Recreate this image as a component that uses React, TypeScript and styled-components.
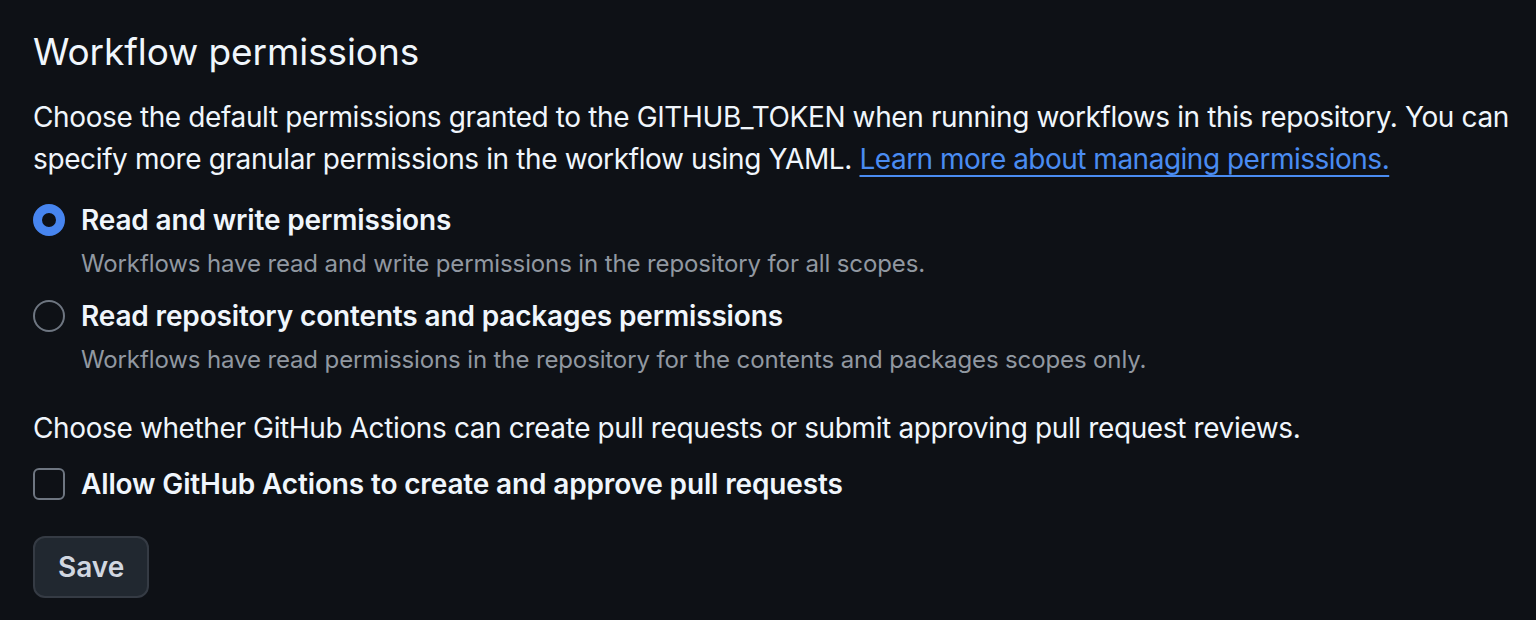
import styled, { createGlobalStyle } from "styled-components";

const GlobalStyle = createGlobalStyle`
  html, body {
    margin: 0;
    padding: 0;
    background: #0e1116;
  }
  body {
    font-family: Inter, "Noto Sans", "Liberation Sans", sans-serif;
    color: #f0f6fc;
  }
`;

interface Option {
  id: string;
  label: string;
  description: string;
}

const options: Option[] = [
  {
    id: "write",
    label: "Read and write permissions",
    description:
      "Workflows have read and write permissions in the repository for all scopes.",
  },
  {
    id: "read",
    label: "Read repository contents and packages permissions",
    description:
      "Workflows have read permissions in the repository for the contents and packages scopes only.",
  },
];

export default function App() {
  const selected = "write";

  return (
    <>
      <GlobalStyle />
      <Page>
        <Title>Workflow permissions</Title>
        <Lead>
          Choose the default permissions granted to the GITHUB_TOKEN when
          running workflows in this repository. You can specify more granular
          permissions in the workflow using YAML.{" "}
          <Link href="#">Learn more about managing permissions.</Link>
        </Lead>

        <Options>
          {options.map((opt) => (
            <OptionRow key={opt.id}>
              <Radio checked={opt.id === selected} />
              <OptionText>
                <OptionLabel>{opt.label}</OptionLabel>
                <OptionNote>{opt.description}</OptionNote>
              </OptionText>
            </OptionRow>
          ))}
        </Options>

        <Lead>
          Choose whether GitHub Actions can create pull requests or submit
          approving pull request reviews.
        </Lead>
        <CheckRow>
          <Checkbox />
          <OptionLabel>Allow GitHub Actions to create and approve pull requests</OptionLabel>
        </CheckRow>

        <SaveButton>Save</SaveButton>
      </Page>
    </>
  );
}

const Page = styled.div`
  padding: 22px 20px 0 33px;
  display: flex;
  flex-direction: column;
  align-items: flex-start;
`;

const Title = styled.h2`
  margin: 0 0 14px;
  font-size: 37px;
  font-weight: 400;
  line-height: 60px;
  letter-spacing: -0.1px;
  color: #f0f6fc;
`;

const Lead = styled.p`
  margin: 0;
  font-size: 28px;
  line-height: 42px;
  letter-spacing: -0.38px;
  color: #f0f6fc;
`;

const Link = styled.a`
  color: #4a8cf2;
  letter-spacing: -0.5px;
  text-decoration: underline;
  text-underline-offset: 6px;
  text-decoration-thickness: 2px;
`;

const Options = styled.div`
  display: flex;
  flex-direction: column;
  gap: 12px;
  margin: 20px 0 27px;
`;

const OptionRow = styled.label`
  display: flex;
  gap: 16px;
  align-items: flex-start;
`;

const Radio = styled.span<{ checked: boolean }>`
  flex: none;
  box-sizing: border-box;
  width: 32px;
  height: 32px;
  margin-top: 4px;
  border-radius: 50%;
  border: ${({ checked }) => (checked ? "9px solid #4785ef" : "2px solid #6e7681")};
  background: #0e1116;
`;

const OptionText = styled.div`
  display: flex;
  flex-direction: column;
`;

const OptionLabel = styled.span`
  font-size: 28px;
  line-height: 40px;
  font-weight: 600;
  letter-spacing: -0.15px;
  color: #f0f6fc;
`;

const OptionNote = styled.span`
  margin-top: 4px;
  font-size: 24px;
  line-height: 40px;
  letter-spacing: -0.12px;
  color: #9198a1;
`;

const CheckRow = styled.label`
  display: flex;
  gap: 16px;
  align-items: center;
  margin-top: 15px;
`;

const Checkbox = styled.span`
  flex: none;
  box-sizing: border-box;
  width: 32px;
  height: 32px;
  border-radius: 6px;
  border: 2px solid #6e7681;
  background: #0e1116;
`;

const SaveButton = styled.button`
  margin-top: 32px;
  box-sizing: border-box;
  height: 62px;
  padding: 0 23px;
  border-radius: 12px;
  border: 2px solid #353b44;
  background: #212830;
  color: #d1d7e0;
  font-family: inherit;
  font-size: 28px;
  font-weight: 600;
  cursor: pointer;
`;
